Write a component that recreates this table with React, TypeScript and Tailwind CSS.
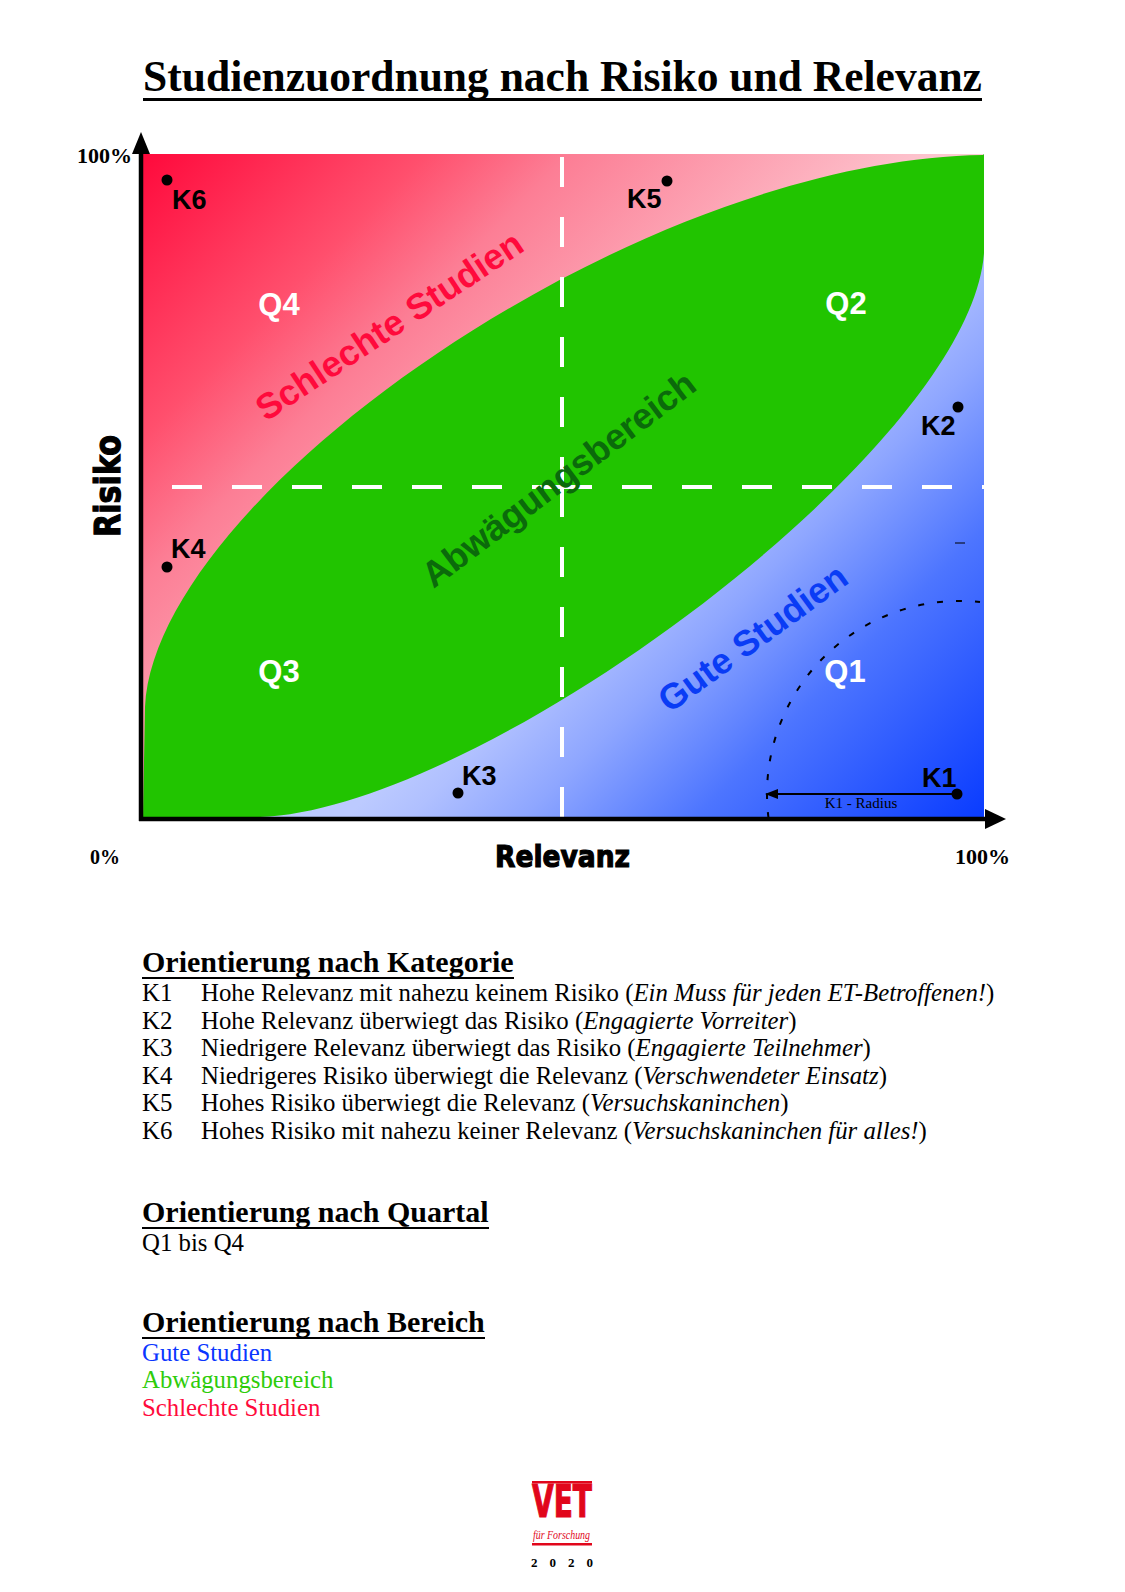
const greenPath =
  "M145,707 C155,495 635,160 983,155 L984,154 L984,253 C970,450 480,810 260,817 L143,817 Z"

const sans = "'Liberation Sans', Arial, sans-serif"
const serif = "'Liberation Serif', 'Times New Roman', serif"
const heavy = "'DejaVu Sans', 'Liberation Sans', sans-serif"

const points = [
  { k: "K6", tx: 172, ty: 209, dx: 167, dy: 180 },
  { k: "K5", tx: 627, ty: 208, dx: 667, dy: 181 },
  { k: "K2", tx: 921, ty: 435, dx: 958, dy: 407 },
  { k: "K4", tx: 171, ty: 558, dx: 167, dy: 567 },
  { k: "K3", tx: 462, ty: 785, dx: 458, dy: 793 },
  { k: "K1", tx: 922, ty: 787, dx: 957, dy: 794 },
]

const quarters = [
  { q: "Q4", x: 279, y: 315 },
  { q: "Q2", x: 846, y: 314 },
  { q: "Q3", x: 279, y: 682 },
  { q: "Q1", x: 845, y: 682 },
]

function Chart() {
  return (
    <svg className="block" width={1125} height={784} viewBox="0 101 1125 784">
      <defs>
        <linearGradient id="red" gradientUnits="userSpaceOnUse" x1="145" y1="155" x2="569" y2="579">
          <stop offset="0" stopColor="#ff0a3c" />
          <stop offset="0.33" stopColor="#ff4f6d" />
          <stop offset="0.5" stopColor="#fc7e95" />
          <stop offset="0.9" stopColor="#fdc0cb" />
          <stop offset="1" stopColor="#fdd0d8" />
        </linearGradient>
        <linearGradient id="blue" gradientUnits="userSpaceOnUse" x1="983" y1="816" x2="665" y2="498">
          <stop offset="0" stopColor="#0a3cff" />
          <stop offset="0.45" stopColor="#4d75ff" />
          <stop offset="0.72" stopColor="#8ea6ff" />
          <stop offset="0.9" stopColor="#b0c0ff" />
          <stop offset="1" stopColor="#bccaff" />
        </linearGradient>
      </defs>

      {/* areas */}
      <polygon points="143,154 984,154 143,817" fill="url(#red)" />
      <polygon points="984,154 984,817 143,817" fill="url(#blue)" />
      <path d={greenPath} fill="#21c400" />

      {/* quadrant dividers */}
      <g stroke="#fff" strokeWidth={4} strokeDasharray="30 30">
        <line x1={562} y1={487} x2={143} y2={487} />
        <line x1={562} y1={487} x2={984} y2={487} />
        <line x1={562} y1={487} x2={562} y2={154} />
        <line x1={562} y1={487} x2={562} y2={817} />
      </g>

      {/* K1 radius */}
      <path d="M768.5,818 A193,193 0 0 1 980,602" fill="none" stroke="#000" strokeWidth={2} strokeDasharray="6 13" />
      <line x1={957} y1={794} x2={772} y2={794} stroke="#000" strokeWidth={2} />
      <polygon points="765,794 778,789 778,799" fill="#000" />
      <line x1={955} y1={543} x2={965} y2={543} stroke="#000" strokeWidth={1} />
      <text x={861} y={808} fontFamily={serif} fontSize={15} textAnchor="middle" fill="#000">
        K1 - Radius
      </text>

      {/* area labels */}
      <text transform="translate(396,336) rotate(-33.5)" textAnchor="middle" fontFamily={sans} fontWeight={700} fontSize={36} fill="#ff0a3c">
        Schlechte Studien
      </text>
      <text transform="translate(566,489) rotate(-37)" textAnchor="middle" fontFamily={sans} fontWeight={700} fontSize={36} fill="#0b6a0b">
        Abwägungsbereich
      </text>
      <text transform="translate(760,648) rotate(-36)" textAnchor="middle" fontFamily={sans} fontWeight={700} fontSize={36} fill="#0a3cf5">
        Gute Studien
      </text>

      {quarters.map((q) => (
        <text key={q.q} x={q.x} y={q.y} textAnchor="middle" fontFamily={sans} fontWeight={700} fontSize={31} fill="#fff">
          {q.q}
        </text>
      ))}

      {points.map((p) => (
        <g key={p.k}>
          <circle cx={p.dx} cy={p.dy} r={5.5} fill="#000" />
          <text x={p.tx} y={p.ty} fontFamily={sans} fontWeight={700} fontSize={27} fill="#000">
            {p.k}
          </text>
        </g>
      ))}

      {/* axes */}
      <line x1={141} y1={150} x2={141} y2={821} stroke="#000" strokeWidth={4.5} />
      <line x1={139} y1={819} x2={990} y2={819} stroke="#000" strokeWidth={4.5} />
      <polygon points="141,132 132,154 150,154" fill="#000" />
      <polygon points="1006,819 985,809 985,829" fill="#000" />

      <text x={77} y={163} fontFamily={serif} fontWeight={700} fontSize={21} textLength={55} lengthAdjust="spacingAndGlyphs" fill="#000">
        100%
      </text>
      <text x={90} y={864} fontFamily={serif} fontWeight={700} fontSize={21} textLength={30} lengthAdjust="spacingAndGlyphs" fill="#000">
        0%
      </text>
      <text x={955} y={864} fontFamily={serif} fontWeight={700} fontSize={21} textLength={55} lengthAdjust="spacingAndGlyphs" fill="#000">
        100%
      </text>
      <text x={495} y={867} fontFamily={heavy} fontWeight={700} fontSize={30} textLength={135} lengthAdjust="spacingAndGlyphs" stroke="#000" strokeWidth={1.2} fill="#000">
        Relevanz
      </text>
      <text transform="translate(120,486) rotate(-90)" textAnchor="middle" fontFamily={heavy} fontWeight={700} fontSize={35} textLength={102} lengthAdjust="spacingAndGlyphs" stroke="#000" strokeWidth={1.2} fill="#000">
        Risiko
      </text>
    </svg>
  )
}

function Logo() {
  return (
    <svg className="mx-auto mt-[53px] block" width={225} height={100} viewBox="450 1475 225 100">
      <rect x={532} y={1482} width={60} height={2.5} fill="#e1061b" />
      <text x={532} y={1518} fontFamily={heavy} fontWeight={700} fontSize={45} textLength={60} lengthAdjust="spacingAndGlyphs" stroke="#e1061b" strokeWidth={1.2} fill="#e1061b">
        VET
      </text>
      <text x={533} y={1540} fontFamily={serif} fontStyle="italic" fontSize={12} textLength={57} lengthAdjust="spacingAndGlyphs" fill="#e1061b">
        für Forschung
      </text>
      <rect x={532} y={1544} width={60} height={2.5} fill="#e1061b" />
      <text x={531} y={1568} fontFamily={serif} fontWeight={700} fontSize={13} textLength={62} lengthAdjust="spacing" fill="#000">
        2020
      </text>
    </svg>
  )
}

const rows: [string, string, string][] = [
  ["K1", "Hohe Relevanz mit nahezu keinem Risiko", "Ein Muss für jeden ET-Betroffenen!"],
  ["K2", "Hohe Relevanz überwiegt das Risiko", "Engagierte Vorreiter"],
  ["K3", "Niedrigere Relevanz überwiegt das Risiko", "Engagierte Teilnehmer"],
  ["K4", "Niedrigeres Risiko überwiegt die Relevanz", "Verschwendeter Einsatz"],
  ["K5", "Hohes Risiko überwiegt die Relevanz", "Versuchskaninchen"],
  ["K6", "Hohes Risiko mit nahezu keiner Relevanz", "Versuchskaninchen für alles!"],
]

function Heading({ children, className = "" }: { children: React.ReactNode; className?: string }) {
  return (
    <h2 className={`w-fit border-b-2 border-black text-[30px] font-bold leading-[30px] ${className}`}>
      {children}
    </h2>
  )
}

export default function App() {
  return (
    <div className="min-h-[1592px] w-full bg-white font-['Liberation_Serif','Times_New_Roman',serif] text-black">
      <div className="flex justify-center pt-[54px]">
        <h1 className="border-b-[3px] border-black text-[43.5px] font-bold leading-[44px]">
          Studienzuordnung nach Risiko und Relevanz
        </h1>
      </div>

      <Chart />

      <div className="mx-auto mt-[62px] w-[841px] text-[24.8px] leading-[27.5px]">
        <Heading>Orientierung nach Kategorie</Heading>
        {rows.map(([k, text, note]) => (
          <div key={k} className="flex whitespace-nowrap">
            <span className="w-[59px] shrink-0">{k}</span>
            <span>
              {text} (<i>{note}</i>)
            </span>
          </div>
        ))}

        <Heading className="mt-[53px]">Orientierung nach Quartal</Heading>
        <div>Q1 bis Q4</div>

        <Heading className="mt-[50px]">Orientierung nach Bereich</Heading>
        <div className="text-[#0a36ff]">Gute Studien</div>
        <div className="text-[#2ecc0a]">Abwägungsbereich</div>
        <div className="text-[#ff0a3c]">Schlechte Studien</div>
      </div>

      <Logo />
    </div>
  )
}
